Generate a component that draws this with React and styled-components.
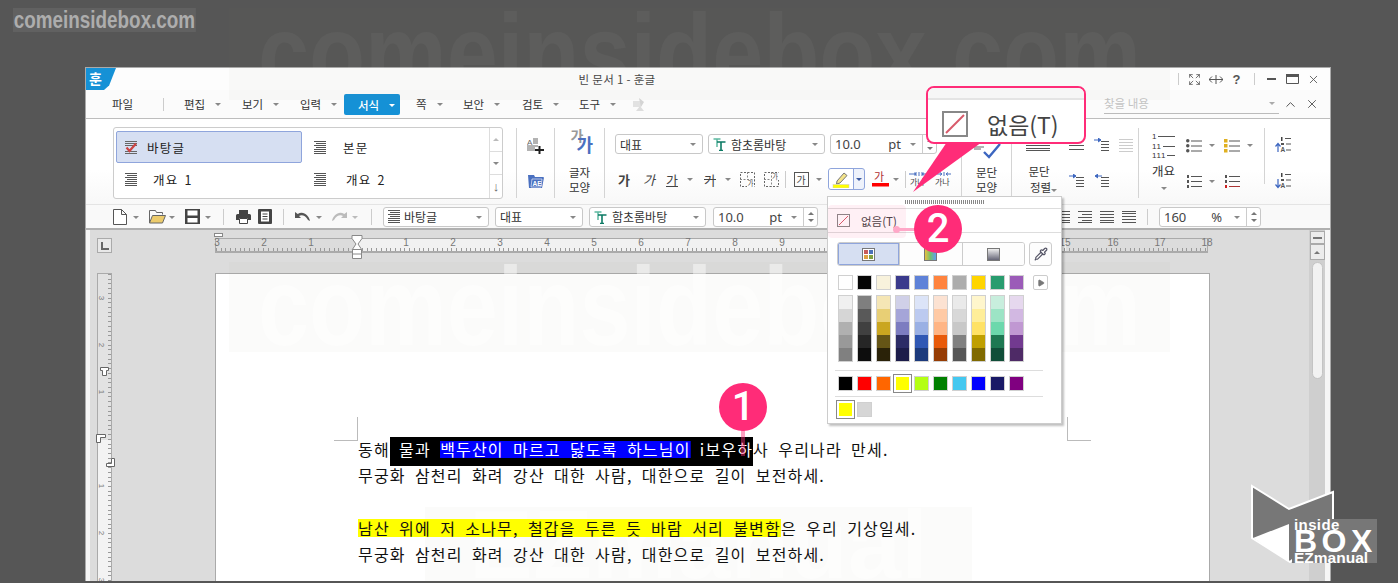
import React from "react";
import styled, { createGlobalStyle } from "styled-components";
import { Expand, X, ChevronUp, Pipette, Play } from "lucide-react";

const Global = createGlobalStyle`
  html, body { margin: 0; padding: 0; background: #565656; }
  body { font-family: "Noto Sans CJK KR", "Noto Sans", sans-serif; color: #333; overflow: hidden; }
  * { box-sizing: border-box; }
`;

const PINK = "#ff2c78";

const Page = styled.div`
  position: relative; width: 1398px; height: 583px; overflow: hidden; background: #565656;
  padding: 67px 0 2px 85px;
`;
const Win = styled.div`
  width: 1246px; height: 514px; background: #fff; border: 1px solid #aaa; border-bottom: 0;
  display: flex; flex-direction: column; overflow: hidden;
`;
const TitleBar = styled.div`
  height: 22px; flex: none; display: flex; align-items: center; position: relative; background: #fdfdfd;
`;
const LogoTab = styled.div`
  width: 30px; height: 22px; flex: none; background: #1591d6; color: #fff; font-size: 14px; font-weight: 700; line-height: 21px; padding-left: 3px;
  clip-path: polygon(0 0, 100% 0, 77% 80%, 60% 100%, 0 100%);
`;
const TitleText = styled.div`
  position: absolute; left: 482px; width: 98px; top: 1px; font-size: 11.5px; line-height: 20px; letter-spacing: .3px; text-align: center; white-space: nowrap; color: #444;
`;
const WinControls = styled.div`
  margin-left: auto; display: flex; align-items: center; height: 100%; padding-right: 6px; color: #555;
`;
const CtlCell = styled.div`
  width: ${p => p.$w || 21}px; display: flex; justify-content: center; align-items: center; font: bold 13px "Liberation Sans", sans-serif; color: #555;
`;
const VLine = styled.div`
  width: 1px; flex: none; height: ${p => p.$h || 20}px; background: ${p => p.$c || "#ccc"}; margin: 0 ${p => p.$mr ?? 0}px 0 ${p => p.$ml ?? 0}px; align-self: center;
`;

const MenuBar = styled.div`
  height: 29px; flex: none; display: flex; align-items: center; padding-left: 26px; background: #fbfbfb; border-bottom: 1px solid #bdbdbd; position: relative;
`;
const MenuItem = styled.div`
  width: ${p => p.$w}px; flex: none; font-size: 11.5px; line-height: 21px; display: flex; align-items: center; gap: 10px; color: #333; white-space: nowrap;
`;
const ActiveTab = styled.div`
  width: 56px; height: 21px; flex: none; margin: 1px 16px 0 0; background: #1591d6; border-radius: 2px; color: #fff; font-size: 11.5px; font-weight: 500;
  display: flex; align-items: center; gap: 10px; padding-left: 14px;
`;
const Caret = styled.span`
  width: 0; height: 0; flex: none; display: inline-block; border-left: 3px solid transparent; border-right: 3px solid transparent;
  border-top: 3px solid ${p => p.$c || "#888"}; margin-top: 1px;
`;
const SearchBox = styled.div`
  position: absolute; left: 1018px; top: 3px; width: 175px; height: 21px; border-bottom: 1px solid #bbb; color: #c4c4c4; font-size: 11.5px; line-height: 19px;
  display: flex; justify-content: space-between; align-items: center; padding-right: 4px;
`;
const SearchWrap = styled.div`flex: 1; height: 100%; display: flex;`;
const SearchBtns = styled.div`
  position: absolute; left: 1197px; top: 4px; display: flex; align-items: center; height: 20px; color: #555; gap: 7px;
`;

const Ribbon = styled.div`
  height: 86px; flex: none; display: flex; padding: 8px 0 0 27px; background: linear-gradient(#fff 60%, #f8f8f8); border-bottom: 1px solid #e4e4e4;
`;
const StyleBox = styled.div`
  width: 390px; height: 72px; border: 1px solid #ccc; border-radius: 3px; display: flex; margin-right: 13px; background: #fff; flex: none;
`;
const StyleGrid = styled.div`flex: 1; display: grid; grid-template-columns: 189px 1fr; grid-template-rows: 32px 32px; padding: 3px 0 0 2px;`;
const StyleItem = styled.div`
  display: flex; align-items: center; font-size: 12.5px; letter-spacing: 1.2px; word-spacing: 2px; padding-left: 9px; color: #222; white-space: nowrap;
  ${p => p.$on && `background:#d6dff2; border:1px solid #8fa5dc; border-radius:2px; padding-left:8px; margin-right:3px;`}
`;
const StyleLabel = styled.span`margin-left: ${p => p.$ml}px;`;
const StyleScroll = styled.div`width: 13px; border-left: 1px solid #ddd; display: flex; flex-direction: column;`;
const ScrollCell = styled.div`
  flex: 1; display: flex; align-items: center; justify-content: center; border-bottom: 1px solid #ddd; &:last-child { border-bottom: 0; }
  color: #666; font: 13px "Liberation Sans", sans-serif;
`;
const CaretUp = styled(Caret)`border-top: 0; border-bottom: 3px solid ${p => p.$c || "#bbb"};`;
const RSep = styled.div`width: 1px; height: ${p => p.$h || 70}px; background: #d4d4d4; flex: none; margin-top: 1px;`;
const IconCol = styled.div`
  width: ${p => p.$w}px; height: 72px; flex: none; display: flex; flex-direction: column; justify-content: space-around; align-items: center;
`;
const ShapeCol = styled.div`
  width: ${p => p.$w}px; height: 72px; flex: none; display: flex; flex-direction: column; align-items: center; font-size: 11.5px; line-height: 15px; color: #333;
`;
const ShapeIcon = styled.div`
  height: 38px; width: 30px; position: relative; flex: none;
`;
const BigGa = styled.span`
  position: absolute; font-weight: ${p => p.$b ? 700 : 400}; font-size: ${p => p.$s}px; color: ${p => p.$c}; left: ${p => p.$l}px; top: ${p => p.$t}px; line-height: 1;
`;
const FontCol = styled.div`
  width: 356px; height: 72px; flex: none; padding: 7px 0 0 10px; display: flex; flex-direction: column; gap: 14px;
`;
const Row = styled.div`display: flex; align-items: center; height: ${p => p.$h || 20}px; gap: ${p => p.$gap || 0}px;`;
const Select = styled.div`
  width: ${p => p.$w}px; height: 20px; flex: none; border: 1px solid #c8c8c8; border-radius: 3px; background: #fff; display: flex; align-items: center;
  font-size: 12px; padding: 0 ${p => p.$pr ?? 6}px 0 4px; color: #333; margin-left: ${p => p.$ml || 0}px; white-space: nowrap; overflow: hidden; position: relative;
`;
const SelText = styled.span`flex: 1; margin-left: ${p => p.$ml || 0}px;`;
const Num = styled.span`font: 13px "Noto Sans", sans-serif; color: #444; letter-spacing: 0;`;
const Spin = styled.div`
  width: 14px; align-self: stretch; flex: none; border-left: 1px solid #ccc; display: flex; flex-direction: column; align-items: center; justify-content: space-evenly; margin-left: 6px;
`;
const Cell = styled.div`
  width: ${p => p.$w}px; height: 100%; flex: none; display: flex; align-items: center; justify-content: center; margin-left: ${p => p.$ml || 0}px;
  font-size: 13px; color: #444;
`;
const Ga = styled.span`
  font-weight: ${p => p.$b ? 700 : 400}; font-style: ${p => p.$i ? "italic" : "normal"};
  text-decoration: ${p => p.$u ? "underline" : p.$s ? "line-through" : "none"}; color: ${p => p.$c || "#444"}; font-size: 13px;
`;
const BoxGa = styled.span`
  width: 15px; height: 15px; border: 1px solid #555; font-size: 10px; line-height: 13px; text-align: center; display: block; color: #444;
`;
const HiBtn = styled.div`
  width: 37px; height: 22px; flex: none; margin-left: 5px; border: 1px solid #8fa5dc; border-radius: 3px; background: #eef2fb; display: flex;
`;
const HiLeft = styled.div`flex: 1; display: flex; align-items: center; justify-content: center; background: #fff; border-radius: 3px 0 0 3px;`;
const HiRight = styled.div`width: 11px; border-left: 1px solid #8fa5dc; display: flex; align-items: center; justify-content: center;`;
const ParaCol = styled.div`
  width: 126px; height: 72px; flex: none; display: grid; grid-template-columns: 52px 25px 25px 24px; grid-template-rows: 36px 36px; justify-items: center; align-items: center;
`;
const ParaLabel = styled.div`font-size: 11.5px; line-height: 16px; text-align: center; color: #333; grid-row: 2; margin-top: -4px; padding-left: 2px; white-space: nowrap;`;
const ParaCaret = styled(Caret)`margin-right: -9px;`;
const OutlineCol = styled.div`
  width: 125px; height: 72px; flex: none; display: grid; grid-template-columns: 47px 38px 40px; grid-template-rows: 36px 36px; justify-items: start; align-items: center;
`;
const OutlineMain = styled.div`
  grid-row: 1 / 3; width: 100%; height: 100%; display: flex; flex-direction: column; align-items: center; font-size: 12.5px; color: #333; padding-left: 2px;
`;
const OutlineName = styled.div`line-height: 16px; margin-top: 2px;`;
const OutlineCaret = styled(Caret)`margin-top: 8px;`;
const Numbered = styled.div`
  font: 8px/9.5px "Liberation Sans", sans-serif; color: #333; display: flex; flex-direction: column; margin-top: 5px; width: 23px;
`;
const NumRow = styled.div`display: flex; align-items: center; gap: 1px; letter-spacing: .6px; &::after { content: ""; flex: 1; height: 1px; background: #555; }`;
const IconWithCaret = styled.div`display: flex; align-items: center; gap: 7px;`;
const SortCol = styled.div`width: 37px; height: 72px; display: flex; flex-direction: column; justify-content: space-around; align-items: center; padding-top: 0; flex: none;`;

const ToolBar = styled.div`
  height: 25px; flex: none; display: flex; align-items: center; padding-left: 27px; background: #f9f9f9; border-bottom: 2px solid #b0b0b0;
`;
const ToolRight = styled.div`margin-left: auto; margin-right: 69px; display: flex; align-items: center; gap: 8px;`;

const Work = styled.div`
  flex: 1; min-height: 0; display: grid; grid-template-columns: 125px 995px 1fr; grid-template-rows: 43px 1fr; background: #dcdcdc;
  border-left: 4px solid #f4f4f4; border-right: 5px solid #f6f6f6;
`;
const CornerCell = styled.div`padding: 8px 0 0 7px;`;
const CornerBox = styled.div`
  width: 15px; height: 15px; border: 1px solid #aaa; background: #e8e8e8; position: relative;
  &::after { content: ""; position: absolute; left: 3px; top: 3px; width: 6px; height: 6px; border-left: 2px solid #666; border-bottom: 2px solid #666; }
`;
const HRulerWrap = styled.div`padding-top: 8px; position: relative; grid-column: 2;`;
const HRuler = styled.div`
  height: 15px; width: 993px; position: relative; border: 1px solid #aaa; border-bottom: 2px solid #aaa; border-top-width: 1px;
  background: linear-gradient(90deg, #dcdcdc 143px, #f1f1f1 143px, #f1f1f1 850px, #dcdcdc 850px);
  &::after { content: ""; position: absolute; left: 0; right: 0; bottom: 0; height: 3px;
    background: repeating-linear-gradient(90deg, #999 0 1px, transparent 1px 4.71px); }
`;
const RulerNum = styled.span`
  position: absolute; top: -2px; font: 10px "Liberation Sans", sans-serif; color: #777; transform: translateX(-50%);
`;
const Marker = styled.svg`position: absolute; overflow: visible;`;
const VRulerCell = styled.div`position: relative; padding-left: 7px; grid-row: 2; grid-column: 1;`;
const VRuler = styled.div`
  width: 15px; height: 100%; position: relative; border: 1px solid #aaa; border-bottom: 0;
  background: linear-gradient(#e2e2e2 166px, #f3f3f3 166px);
  &::after { content: ""; position: absolute; top: 0; bottom: 0; right: 0; width: 3px;
    background: repeating-linear-gradient(#999 0 1px, transparent 1px 4.71px); }
`;
const VNum = styled.span`
  position: absolute; left: 1px; font: 8px "Liberation Sans", sans-serif; color: #777; transform: translateY(-50%) rotate(90deg);
`;
const Paper = styled.div`
  background: #fff; border: 1px solid #aaa; border-bottom: 0; position: relative; padding: 162px 0 0 142px; overflow: hidden; grid-row: 2; grid-column: 2;
`;
const Crop = styled.div`
  position: absolute; width: 24px; height: 24px; top: 143px; left: ${p => p.$l}px; border-bottom: 1px solid #bbb;
  ${p => p.$r ? "border-left: 1px solid #bbb;" : "border-right: 1px solid #bbb;"}
`;
const Line = styled.div`
  height: 26.3px; font-size: 16px; line-height: 26.3px; letter-spacing: 1.18px; word-spacing: 4.5px; color: #111; white-space: nowrap; position: relative; z-index: 2;
`;
const BlackSel = styled.span`background: #000; color: #fff; padding: 0 0 5px;`;
const BlueSel = styled.span`background: linear-gradient(#00f, #00f) center / 100% 17px no-repeat; color: #fff;`;
const Yellow = styled.span`background: linear-gradient(#ff0, #ff0) center / 100% 18px no-repeat;`;
const ScrollCol = styled.div`
  grid-row: 1 / 3; grid-column: 3; justify-self: end; width: 16px; background: #cfcfcf; display: flex; flex-direction: column; align-items: center; padding-top: 1px; gap: 0;
`;
const ScrBtn = styled.div`
  width: 15px; height: ${p => p.$h}px; border: 1px solid #aaa; background: #ececec; display: flex; align-items: center; justify-content: center; margin-bottom: ${p => p.$mb || 0}px; flex: none;
`;
const ScrMinus = styled.div`width: 9px; height: 2px; background: #777;`;
const Thumb = styled.div`width: 11px; height: 117px; border: 1px solid #c4c4c4; border-radius: 6px; background: #f2f2f2; flex: none;`;

const Panel = styled.div`
  position: absolute; left: 827px; top: 196px; width: 235px; height: 228px; background: #fff; border: 1px solid #ccc; box-shadow: 2px 2px 2px rgba(0,0,0,.25);
  display: flex; flex-direction: column; padding: 0;
`;
const Grip = styled.div`
  height: 12px; flex: none; border-bottom: 1px solid #ddd; display: flex; justify-content: center; align-items: flex-start; padding-top: 3px;
  &::after { content: ""; width: 80px; height: 4px;
    background: repeating-linear-gradient(90deg, #888 0 1px, transparent 1px 2px); margin-right: 0; }
`;
const NoneRow = styled.div`
  height: 24px; flex: none; border-bottom: 1px solid #ddd; display: flex; align-items: center; padding-left: 9px; gap: 11px; font-size: 11.5px; color: #444;
`;
const Tabs = styled.div`
  display: flex; height: 24px; margin: 9px 0 0 9px; flex: none;
`;
const TabGroup = styled.div`display: flex; width: 188px; height: 100%; border: 1px solid #ccc; border-radius: 3px; overflow: hidden;`;
const PTab = styled.div`
  flex: 1; display: flex; align-items: center; justify-content: center; border-right: 1px solid #ccc; &:last-child { border-right: 0; }
  ${p => p.$on ? "background:#d6dff2; box-shadow: inset 0 0 0 1px #8fa5dc;" : "background:#fdfdfd;"}
`;
const TabIcon = styled.div`
  width: 13px; height: 13px; border: 1px solid #777; background: ${p => p.$bg}; flex: none;
`;
const DropBtn = styled.div`
  width: 23px; height: 100%; margin-left: 4px; border: 1px solid #ccc; border-radius: 3px; display: flex; align-items: center; justify-content: center; color: #556; background: #fdfdfd;
`;
const SwatchRow = styled.div`display: flex; gap: 4px; padding-left: 10px; margin-top: ${p => p.$mt || 0}px; flex: none; align-items: center;`;
const Swatch = styled.div`
  width: 15px; height: 15px; border: 1px solid #d0d0d0; background: ${p => p.$c}; flex: none;
  ${p => p.$sel && "outline: 1px solid #888; outline-offset: 1px; border-color:#fff;"}
`;
const MoreBtn = styled.div`
  width: 15px; height: 15px; margin-left: 5px; border: 1px solid #ccc; border-radius: 2px; display: flex; align-items: center; justify-content: center; color: #777;
`;
const ShadeCol = styled.div`width: 15px; height: 67px; border: 1px solid #d0d0d0; display: flex; flex-direction: column; flex: none;`;
const Shade = styled.div`flex: 1; background: ${p => p.$c};`;
const PanelSep = styled.div`height: 1px; background: #ddd; margin: ${p => p.$m}; flex: none; width: 208px;`;

const Callout = styled.div`
  position: absolute; left: 926px; top: 86px; width: 160px; height: 58px; background: #fff; border: 2px solid ${PINK}; border-radius: 8px; overflow: hidden;
  display: flex; flex-direction: column;
`;
const CalloutTop = styled.div`height: 12px; background: #f6f6f6; border-bottom: 2px solid #e4e4e4; flex: none;`;
const CalloutBody = styled.div`
  flex: 1; display: flex; align-items: center; gap: 19px; padding: 5px 0 0 14px; font-size: 23px; line-height: 30px; color: #444; white-space: nowrap;
`;
const Pointer = styled.svg`position: absolute; left: 910px; top: 142px; width: 76px; height: 52px;`;
const Badge = styled.div`
  position: absolute; left: ${p => p.$x - 24}px; top: ${p => p.$y - 24}px; width: 48px; height: 48px; border-radius: 50%; background: ${PINK}; color: #fff;
  font: 500 40px/48px Roboto, sans-serif; text-align: center;
`;
const StemV = styled.div`position: absolute; left: 741px; top: 428px; width: 4px; height: 28px; background: rgba(255,44,120,.45); z-index: 3;`;
const StemH = styled.div`position: absolute; left: 897px; top: 228px; width: 20px; height: 3px; background: #ffa8c8;`;
const StemDot = styled.div`position: absolute; left: 893px; top: 226px; width: 7px; height: 7px; border-radius: 50%; background: #ffa8c8;`;
const HiNone = styled.div`position: absolute; left: 828px; top: 205px; width: 78px; height: 33px; border-radius: 4px; background: rgba(255,44,120,.07);`;

const Mark = styled.div`
  position: absolute; left: 13px; top: 8px; padding: 0 1px; background: rgba(255,255,255,.07); font: bold 23px/24px "Liberation Sans", sans-serif; color: #adadad; white-space: nowrap;
  transform: scaleX(.82); transform-origin: left center;
`;
const Wm = styled.div`
  position: absolute; left: ${p => p.$x}px; top: ${p => p.$y}px; width: ${p => p.$w}px; height: ${p => p.$h}px; background: rgba(120,120,90,.03); pointer-events: none; overflow: hidden;
  color: rgba(255,255,255,${p => p.$a}); font: bold ${p => p.$f}px/${p => p.$h}px "Liberation Sans", sans-serif; white-space: nowrap;
  display: flex; justify-content: center;
`;
const WmText = styled.span`flex: none; display: block; transform: scaleX(${p => p.$sx});`;
const BrandBox = styled.div`
  position: absolute; left: 1292px; top: 519px; width: 85px; height: 44px; background: #777; color: #fff; font-family: "Liberation Sans", sans-serif; font-weight: 700; padding-left: 2px; display: flex; flex-direction: column;
`;
const BrandSm = styled.div`font-size: 15px; line-height: 11px; letter-spacing: .4px;`;
const BrandBig = styled.div`font-size: 32px; line-height: 23px; letter-spacing: 4.5px; font-weight: 900;`;
const BrandEz = styled.div`font-size: 15.5px; line-height: 10px;`;
const BrandShape = styled.svg`position: absolute; left: 1250px; top: 484px; width: 86px; height: 80px;`;

/* ---------- drawings ---------- */
const L = ({ w = 14, h = 13, rows, sw = 1 }) => (
  <svg width={w} height={h} viewBox={`0 0 ${w} ${h}`}>
    {rows.map(([a, b, y, c], i) => <line key={i} x1={a} x2={b} y1={y + .5} y2={y + .5} stroke={c || "#555"} strokeWidth={sw} />)}
  </svg>
);
const paraRows = [[0,12,0],[2,12,2],[0,12,4],[2,12,6],[0,12,8],[0,12,10],[0,12,12]];
const ParaIcon = () => <L w={12} h={13} rows={paraRows} />;
const CheckPara = () => (
  <svg width="13" height="13" viewBox="0 0 13 13">
    {[0,2,4,10,12].map(y => <line key={y} x1="0" x2="12" y1={y + .5} y2={y + .5} stroke="#666" />)}
    <path d="M1.5 6.5 L4.5 10 L11 2.5" fill="none" stroke="#c44" strokeWidth="2.2" />
  </svg>
);
const NoneIcon = ({ s = 13 }) => (
  <svg width={s} height={s} viewBox="0 0 13 13" style={{ flex: "none" }}>
    <rect x=".5" y=".5" width="12" height="12" fill="#fff" stroke="#888" />
    <line x1="2" y1="11" x2="11" y2="2" stroke="#d85a6a" />
  </svg>
);
const T2 = () => (
  <svg width="13" height="14" viewBox="0 0 13 14" style={{ flex: "none" }}>
    <path d="M.5 2h7M4 2v8" stroke="#5cb8a0" strokeWidth="1.5" fill="none" />
    <path d="M4 5h8.5M8 5v9M6 13.5h4" stroke="#0c7a64" strokeWidth="1.6" fill="none" />
  </svg>
);
const Pencil = () => (
  <svg width="18" height="17" viewBox="0 0 18 17">
    <path d="M5 10 L12 2 L15 4.5 L8 12 L4.5 13Z" fill="#f4e48a" stroke="#777" />
    <rect x="1" y="13.5" width="16" height="3.5" fill="#ffff00" stroke="#ccc" strokeWidth=".5" />
  </svg>
);
const DashBox = ({ up }) => (
  <svg width="15" height="15" viewBox="0 0 15 15">
    <rect x=".5" y=".5" width="14" height="14" fill="none" stroke="#666" strokeDasharray="2 1.5" />
    <line x1="7.5" y1="0" x2="7.5" y2="15" stroke="#888" strokeDasharray="2 1.5" />
    <line x1="0" y1="7.5" x2="15" y2="7.5" stroke="#888" strokeDasharray="2 1.5" />
    <rect x={up ? 8 : 7} y={up ? 1 : 8} width="7" height="7" fill="#fff" />
    <text x={up ? 8 : 7.5} y={up ? 7 : 14} fontSize="6.5" fill="#444" fontFamily="Noto Sans CJK KR">가</text>
  </svg>
);
const Spread = ({ out }) => (
  <svg width="20" height="15" viewBox="0 0 20 15">
    {out ? <path d="M0 2h7M7 0v4M5 .8 7 2 5 3.2M13 2h7M13 0v4M15 .8 13 2l2 1.2M10 0v4" stroke="#4a70c0" fill="none" />
      : <path d="M3 2h5M6 .5 8 2 6 3.500M12 2h5M14 .5 12 2l2 1.500M10 0v4" stroke="#4a70c0" fill="none" />}
    <text x="1" y="13" fontSize="8" fill="#444" fontFamily="Noto Sans CJK KR">가나</text>
  </svg>
);
const ArrowLines = ({ dir }) => (
  <svg width="16" height="14" viewBox="0 0 16 14">
    {dir === "r" ? <path d="M0 2h6M4 0l3 2-3 2" stroke="#3c66c0" fill="#3c66c0" /> : <path d="M8 2H2M4 0 1 2l3 2" stroke="#3c66c0" fill="#3c66c0" />}
    {[3,6,9,12].map(y => <line key={y} x1="7" x2="15" y1={y + .5} y2={y + .5} stroke="#555" />)}
  </svg>
);
const BulletList = ({ c }) => (
  <svg width="16" height="15" viewBox="0 0 16 15">
    {[1,6,11].map(y => <g key={y}>
      <rect x="0" y={y} width="3.5" height="3.5" rx={c ? 0 : 1.7} fill={c || "#555"} />
      <line x1="5" x2="16" y1={y + 2} y2={y + 2} stroke="#555" />
    </g>)}
  </svg>
);
const NumList = ({ red }) => (
  <svg width="16" height="14" viewBox="0 0 16 14">
    {[1,6,11].map((y, i) => <g key={y}>
      <rect x="1" y={y} width="2" height="3" fill={red && i === 2 ? "#c22" : "#555"} />
      <line x1="5" x2="16" y1={y + 1.5} y2={y + 1.5} stroke={red && i === 2 ? "#a33" : "#555"} />
    </g>)}
  </svg>
);
const Sort = ({ up }) => (
  <svg width="17" height="16" viewBox="0 0 17 16">
    <path d={up ? "M3 15V7M.5 9.5 3 6.5l2.5 3" : "M3 6v8M.5 11.5 3 14.5l2.5-3"} stroke="#3c66c0" fill="none" strokeWidth="1.2" />
    <rect x="6" y="0" width="1.5" height="4" fill="#444" /><rect x="6" y="6" width="3" height="2" fill="#555" />
    <text x="5.500" y="15" fontSize="6.500" fontWeight="700" fill="#555" fontFamily="Liberation Sans">A</text>
    <path d="M10 1.500h6M11 7h5M11 13h5" stroke="#555" />
  </svg>
);
const NewDoc = () => <svg width="14" height="16" viewBox="0 0 14 16"><path d="M.5.5h8l5 5v10H.5zM8.500.5v5h5" fill="#fff" stroke="#555" /></svg>;
const Folder = () => <svg width="17" height="15" viewBox="0 0 17 15"><path d="M.5 14V1.500h6l1 2h6v2" fill="none" stroke="#666" /><path d="M.5 14 3.500 6.500h13l-3 7.500z" fill="#eccb6c" stroke="#666" /></svg>;
const Save = () => <svg width="15" height="15" viewBox="0 0 15 15"><path d="M0 0h15v15H0z" fill="#444" /><path d="M2.500 1.500h10v5h-10zM2.500 9h10v4.500h-10z" fill="#fff" /></svg>;
const Printer = () => <svg width="15" height="14" viewBox="0 0 15 14"><path d="M3 0h9v4H3z" fill="#444" /><path d="M1.500 4h12a1.500 1.500 0 0 1 1.500 1.500V10H12V8H3v2H0V5.500A1.500 1.500 0 0 1 1.500 4z" fill="#444" /><path d="M3.500 8.500h8v5h-8z" fill="#fff" stroke="#444" /></svg>;
const Preview = () => <svg width="14" height="15" viewBox="0 0 14 15"><rect width="14" height="15" rx="1" fill="#444" /><path d="M3 2.500h8v10H3z" fill="#fff" /><path d="M4.500 5h5M4.500 7.500h5M4.500 10h5" stroke="#444" /></svg>;
const Undo = ({ c, flip }) => <svg width="16" height="11" viewBox="0 0 16 11" style={flip ? { transform: "scaleX(-1)" } : undefined}><path d="M0 1v6h6L4 5c2-1.500 6-1.500 9 4l2 1C14 4 8-.5 2.700 3z" fill={c} /></svg>;
const BookIcon = () => (
  <svg width="16" height="13" viewBox="0 0 16 13">
    <path d="M0 0h6l1 2h8l1 .5L14 13H1z" fill="#4a70c0" />
    <path d="M4 4h10l-1 8H3z" fill="#4a70c0" stroke="#fff" strokeWidth=".6" />
    <text x="4.500" y="10.500" fontSize="6.500" fontWeight="700" fill="#fff" fontFamily="Liberation Sans">AE</text>
  </svg>
);
const AddStyle = () => (
  <svg width="17" height="16" viewBox="0 0 17 16">
    <text x="0" y="6.500" fontSize="8" fill="#666" fontFamily="Liberation Sans">A</text>
    <path d="M6 1h5M6 3h5M6 5h5M0 8h11M0 10h8M0 12h8" stroke="#666" />
    <path d="M8 12h9M12.500 8v8" stroke="#222" strokeWidth="2" />
  </svg>
);
const PalMini = () => (
  <svg width="13" height="13" viewBox="0 0 13 13" style={{ flex: "none" }}>
    <rect x=".5" y=".5" width="12" height="12" fill="#fff" stroke="#777" />
    <rect x="2" y="2" width="4" height="4" fill="#c85a5a" /><rect x="7" y="2" width="4" height="4" fill="#4a70b8" />
    <rect x="2" y="7" width="4" height="4" fill="#e0a040" /><rect x="7" y="7" width="4" height="4" fill="#80a040" />
  </svg>
);
const Updown = () => <svg width="14" height="9" viewBox="0 0 14 9"><path d="M0 4.500h14M3 1.500 0 4.500l3 3M11 1.500l3 3-3 3M7 0v9" stroke="#555" fill="none" /></svg>;
const Mx = () => <svg width="13" height="10" viewBox="0 0 13 10"><path d="M.5 2h12v7.500H.5z" fill="none" stroke="#555" /><path d="M0 1.500h13" stroke="#555" strokeWidth="3" /></svg>;

const swatchTop = ["#fff","#050505","#f8f2dc","#3a3a8c","#5f82d8","#ff843f","#adadad","#ffd500","#289c6e","#9b5bb8"];
const shades = [
  ["#f0f0f0","#d6d6d6","#b0b0b0","#999","#808080"],["#7f7f7f","#595959","#404040","#262626","#0d0d0d"],
  ["#f5e6b5","#e8cf75","#caa620","#655516","#2a2208"],["#d0d0e8","#a5a5d8","#7c7cc0","#2c2c66","#1c1c4a"],
  ["#dce4f8","#bccaf0","#9ab0e4","#3058b4","#1c3a7c"],["#fce2d2","#ffcaa5","#ffb585","#e85a0a","#963c04"],
  ["#eaeaea","#d8d8d8","#c8c8c8","#808080","#565656"],["#fff6cc","#ffee99","#ffe265","#bf9f00","#806a00"],
  ["#c8eedd","#9ce4c5","#6cd8ac","#1e7852","#104e38"],["#e6d8ee","#d2b8e2","#c098d2","#723a90","#4e2a66"],
];
const standard = ["#000","#f00","#ff6600","#ff0","#b4ff14","#008000","#44c8f0","#00f","#191966","#800080"];
const menus = [["편집",58],["보기",58],["입력",44]];
const menus2 = [["쪽",47],["보안",59],["검토",57],["도구",57]];
const hNums = [[3,1],[2,48],[1,95],[1,190],[2,237],[3,284],[4,331],[5,378],[6,425],[7,472],[8,519],[9,566],[15,849],[16,897],[17,944],[18,991]];
const vNums = [[3,24],[2,71],[1,118],[1,212],[2,259],[3,306]];

const SpinBox = () => <Spin><CaretUp $c="#777" /><Caret $c="#777" /></Spin>;

export default function App() {
  return (
    <Page>
      <Global />
      <Win>
        <TitleBar>
          <LogoTab>훈</LogoTab>
          <TitleText>빈 문서 1 - 훈글</TitleText>
          <WinControls>
            <VLine $h={12} $mr={5} />
            <CtlCell><Expand size={13} strokeWidth={1.5} /></CtlCell>
            <CtlCell><Updown /></CtlCell>
            <CtlCell>?</CtlCell>
            <VLine $h={12} $ml={7} $mr={6} />
            <CtlCell><svg width="9" height="2"><rect width="9" height="2" fill="#555" /></svg></CtlCell>
            <CtlCell><Mx /></CtlCell>
            <CtlCell><X size={13} strokeWidth={1.6} /></CtlCell>
          </WinControls>
        </TitleBar>
        <MenuBar>
          <MenuItem $w={51}>파일</MenuItem>
          <VLine $h={13} $mr={20} />
          {menus.map(([t, w]) => <MenuItem key={t} $w={w}>{t}<Caret /></MenuItem>)}
          <ActiveTab>서식<Caret $c="#fff" /></ActiveTab>
          {menus2.map(([t, w]) => <MenuItem key={t} $w={w}>{t}<Caret /></MenuItem>)}
          <SearchWrap>
            <svg width="14" height="13" viewBox="0 0 14 13" style={{ marginTop: 8, marginLeft: -3 }}><path d="M0 3h8v6H0z" fill="#e2e2e2" /><path d="M6 0l5 4-3 5z" fill="#d4d4d4" /><path d="M3 13l4-5 4 5z" fill="#ddd" /></svg>
          </SearchWrap>
          <SearchBox>찾을 내용<Caret $c="#aaa" /></SearchBox>
          <SearchBtns><ChevronUp size={15} strokeWidth={1.6} /><X size={14} strokeWidth={1.6} /></SearchBtns>
        </MenuBar>
        <Ribbon>
          <StyleBox>
            <StyleGrid>
              <StyleItem $on><CheckPara /><StyleLabel $ml={9}>바탕글</StyleLabel></StyleItem>
              <StyleItem><ParaIcon /><StyleLabel $ml={17}>본문</StyleLabel></StyleItem>
              <StyleItem><ParaIcon /><StyleLabel $ml={16}>개요 1</StyleLabel></StyleItem>
              <StyleItem><ParaIcon /><StyleLabel $ml={20}>개요 2</StyleLabel></StyleItem>
            </StyleGrid>
            <StyleScroll>
              <ScrollCell><CaretUp /></ScrollCell>
              <ScrollCell><Caret /></ScrollCell>
              <ScrollCell>↓</ScrollCell>
            </StyleScroll>
          </StyleBox>
          <RSep />
          <IconCol $w={37}><AddStyle /><BookIcon /></IconCol>
          <RSep />
          <ShapeCol $w={49}>
            <ShapeIcon><BigGa $s={14} $c="#999" $l={6} $t={1} $b>가</BigGa><BigGa $s={18} $c="#4a70c0" $l={12} $t={8} $b>가</BigGa></ShapeIcon>
            <span>글자</span><span>모양</span>
          </ShapeCol>
          <RSep />
          <FontCol>
            <Row>
              <Select $w={88}><SelText>대표</SelText><Caret /></Select>
              <Select $w={117} $ml={5}><T2 /><SelText $ml={5}>함초롬바탕</SelText><Caret /></Select>
              <Select $w={107} $ml={5} $pr={0}><SelText><Num>10.0</Num></SelText><Num>pt</Num><Caret style={{ marginLeft: 9 }} /><SpinBox /></Select>
            </Row>
            <Row $h={22}>
              <Cell $w={18}><Ga $b>가</Ga></Cell>
              <Cell $w={32}><Ga $i>가</Ga></Cell>
              <Cell $w={14}><Ga $u>가</Ga></Cell>
              <Cell $w={22}><Caret /></Cell>
              <Cell $w={18}><Ga $s>가</Ga></Cell>
              <Cell $w={18}><Caret /></Cell>
              <Cell $w={20}><DashBox /></Cell>
              <Cell $w={28}><DashBox up /></Cell>
              <VLine $h={17} $mr={1} />
              <Cell $w={28}><BoxGa>가</BoxGa></Cell>
              <Cell $w={8}><Caret /></Cell>
              <HiBtn><HiLeft><Pencil /></HiLeft><HiRight><Caret $c="#3c5aa0" /></HiRight></HiBtn>
              <Cell $w={24} $ml={3}><svg width="17" height="16" viewBox="0 0 17 16"><text x="2" y="10" fontSize="11" fill="#b03030" fontFamily="Noto Sans CJK KR">가</text><rect y="12" width="17" height="3.5" fill="#f00" /></svg></Cell>
              <Cell $w={8}><Caret /></Cell>
              <VLine $h={17} $ml={5} />
              <Cell $w={25}><Spread out /></Cell>
              <Cell $w={26}><Spread /></Cell>
            </Row>
          </FontCol>
          <RSep />
          <ShapeCol $w={49}>
            <ShapeIcon><svg width="32" height="33" viewBox="0 0 32 33"><path d="M2 20h10M2 22h7" stroke="#666" /><path d="M12 25l5 5 11-13" fill="none" stroke="#3c66c0" strokeWidth="2.4" /></svg></ShapeIcon>
            <span>문단</span><span>모양</span>
          </ShapeCol>
          <RSep />
          <ParaCol>
            <L w={24} h={12} rows={[[0,24,6],[0,24,9],[0,24,11]]} />
            <L w={15} h={12} rows={[[0,15,6],[0,15,10]]} />
            <ArrowLines dir="r" />
            <L w={14} h={14} rows={[[0,14,1,"#ccc"],[0,14,4,"#ccc"],[0,14,7,"#ccc"],[0,14,10,"#ccc"],[0,14,13,"#ccc"]]} />
            <ParaLabel>문단<br />정렬<ParaCaret /></ParaLabel>
            <ArrowLines dir="r" />
            <ArrowLines dir="l" />
          </ParaCol>
          <RSep />
          <OutlineCol>
            <OutlineMain>
              <Numbered><NumRow>1</NumRow><NumRow>11</NumRow><NumRow>111</NumRow></Numbered>
              <OutlineName>개요</OutlineName>
              <OutlineCaret />
            </OutlineMain>
            <IconWithCaret><BulletList /><Caret /></IconWithCaret>
            <IconWithCaret><BulletList c="#e0b020" /><Caret /></IconWithCaret>
            <IconWithCaret><NumList /><Caret /></IconWithCaret>
            <NumList red />
          </OutlineCol>
          <RSep $h={56} />
          <SortCol><Sort up /><Sort /></SortCol>
        </Ribbon>
        <ToolBar>
          <Cell $w={14}><NewDoc /></Cell><Cell $w={18}><Caret /></Cell>
          <Cell $w={24}><Folder /></Cell><Cell $w={6}><Caret /></Cell>
          <Cell $w={24} $ml={5}><Save /></Cell><Cell $w={8}><Caret /></Cell>
          <VLine $h={16} $ml={11} $mr={4} />
          <Cell $w={30}><Printer /></Cell><Cell $w={14}><Preview /></Cell>
          <VLine $h={16} $ml={11} />
          <Cell $w={16} $ml={11}><Undo c="#555" /></Cell><Cell $w={16}><Caret /></Cell>
          <Cell $w={24}><Undo c="#bbb" flip /></Cell><Cell $w={8}><Caret $c="#bbb" /></Cell>
          <VLine $h={16} $ml={12} />
          <Select $w={106} $ml={11}><ParaIcon /><SelText $ml={4}>바탕글</SelText><Caret /></Select>
          <Select $w={88} $ml={6}><SelText>대표</SelText><Caret /></Select>
          <Select $w={117} $ml={6}><T2 /><SelText $ml={5}>함초롬바탕</SelText><Caret /></Select>
          <Select $w={105} $ml={7} $pr={0}><SelText><Num>10.0</Num></SelText><Num>pt</Num><Caret style={{ marginLeft: 9 }} /><SpinBox /></Select>
          <ToolRight>
            <L w={14} h={13} rows={[[0,14,1],[4,14,4],[0,14,7],[4,14,10],[0,14,12]]} />
            <L w={14} h={13} rows={[[0,14,1],[4,14,4],[0,14,7],[4,14,10],[0,14,12]]} />
            <L w={14} h={13} rows={[[0,14,1],[0,14,4],[0,14,7],[0,14,10],[0,14,12]]} />
            <L w={14} h={13} rows={[[0,14,1],[0,14,3],[0,14,6],[0,14,9],[0,14,12]]} />
            <VLine $h={16} $ml={3} $mr={3} />
            <Select $w={102} $ml={0} $pr={0}><SelText><Num>160</Num></SelText><Num>%</Num><Caret style={{ marginLeft: 12 }} /><SpinBox /></Select>
          </ToolRight>
        </ToolBar>
        <Work>
          <CornerCell><CornerBox /></CornerCell>
          <HRulerWrap>
            <HRuler>
              {hNums.map(([n, x], i) => <RulerNum key={i} style={{ left: x }}>{n}</RulerNum>)}
            </HRuler>
            <Marker width="14" height="26" viewBox="0 0 14 26" style={{ left: 136, top: 5 }}><path d="M1 .5h10v3L7 9l4 6H1l4-6-4-5.500z" fill="#fff" stroke="#888" /><path d="M1.500 14.500h9v9h-9zM1.500 19h9" fill="#fff" stroke="#888" /></Marker>
            <Marker width="9" height="5" viewBox="0 0 9 5" style={{ left: -1, top: 3 }}><rect x=".5" y=".5" width="8" height="3" fill="#fff" stroke="#888" /></Marker>
          </HRulerWrap>
          <VRulerCell>
            <VRuler>
              {vNums.map(([n, y], i) => <VNum key={i} style={{ top: y }}>{n}</VNum>)}
            </VRuler>
            <Marker width="9" height="9" viewBox="0 0 9 9" style={{ left: 10, top: 94 }}><path d="M.5.5h8v3h-2v5h-4v-5h-2z" fill="#fff" stroke="#666" /></Marker>
            <Marker width="11" height="9" viewBox="0 0 11 9" style={{ left: 6, top: 161 }}><path d="M.5.5h9v3h-5v5h-4z" fill="#fff" stroke="#666" /></Marker>
            <Marker width="9" height="9" viewBox="0 0 9 9" style={{ left: 16, top: 185 }}><path d="M5.500.5h3v8h-8v-3h5z" fill="#fff" stroke="#666" /></Marker>
          </VRulerCell>
          <Paper>
            <Crop $l={118} />
            <Crop $l={851} $r />
            <Line>동해<BlackSel> 물과 <BlueSel>백두산이 마르고 닳도록 하느님이</BlueSel> i보우하</BlackSel>사 우리나라 만세.</Line>
            <Line>무궁화 삼천리 화려 강산 대한 사람, 대한으로 길이 보전하세.</Line>
            <Line />
            <Line><Yellow>남산 위에 저 소나무, 철갑을 두른 듯 바람 서리 불변함</Yellow>은 우리 기상일세.</Line>
            <Line>무궁화 삼천리 화려 강산 대한 사람, 대한으로 길이 보전하세.</Line>
          </Paper>
          <ScrollCol>
            <ScrBtn $h={13}><ScrMinus /></ScrBtn>
            <ScrBtn $h={16} $mb={2}><CaretUp $c="#777" /></ScrBtn>
            <Thumb />
          </ScrollCol>
        </Work>
      </Win>

      <Wm $x={229} $y={8} $w={941} $h={92} $f={112} $a={0.04}><WmText $sx={0.82}>comeinsidebox.com</WmText></Wm>
      <Wm $x={229} $y={262} $w={941} $h={90} $f={112} $a={0.45}><WmText $sx={0.82}>comeinsidebox.com</WmText></Wm>
      <Wm $x={425} $y={507} $w={547} $h={76} $f={96} $a={0.45}><WmText $sx={1}>EZmanual</WmText></Wm>

      <Panel>
        <Grip />
        <NoneRow><NoneIcon />없음(T)</NoneRow>
        <Tabs>
          <TabGroup>
            <PTab $on><PalMini /></PTab>
            <PTab><TabIcon $bg="linear-gradient(90deg,#e8c040,#70c070,#60a0f0)" /></PTab>
            <PTab><TabIcon $bg="linear-gradient(#eee,#667)" /></PTab>
          </TabGroup>
          <DropBtn><Pipette size={14} strokeWidth={2} /></DropBtn>
        </Tabs>
        <SwatchRow $mt={9}>
          {swatchTop.map((c, i) => <Swatch key={i} $c={c} />)}
          <MoreBtn><Play size={8} fill="#777" /></MoreBtn>
        </SwatchRow>
        <SwatchRow $mt={5}>
          {shades.map((col, i) => <ShadeCol key={i}>{col.map((c, j) => <Shade key={j} $c={c} />)}</ShadeCol>)}
        </SwatchRow>
        <PanelSep $m="8px 0 0 7px" />
        <SwatchRow $mt={5}>
          {standard.map((c, i) => <Swatch key={i} $c={c} $sel={i === 3} />)}
        </SwatchRow>
        <PanelSep $m="5px 0 0 7px" />
        <SwatchRow $mt={5}>
          <Swatch $c="#ff0" $sel />
          <Swatch $c="#d6d6d6" />
        </SwatchRow>
      </Panel>
      <HiNone />

      <Pointer viewBox="0 0 76 52"><path d="M37 0 H72 L3 50z" fill={PINK} /></Pointer>
      <Callout>
        <CalloutTop />
        <CalloutBody><NoneIcon s={26} />없음(T)</CalloutBody>
      </Callout>

      <StemV />
      <Badge $x={743} $y={407}>1</Badge>
      <StemDot /><StemH />
      <Badge $x={938} $y={229}>2</Badge>

      <Mark>comeinsidebox.com</Mark>

      <BrandShape viewBox="0 0 86 80">
        <path d="M2 2 39 25 83 8V40L40 78 2 54z" fill="#777" stroke="#fff" strokeWidth="2" />
        <path d="M3 54 39 40V78z" fill="#fff" />
      </BrandShape>
      <BrandBox>
        <BrandSm>inside</BrandSm>
        <BrandBig>BOX</BrandBig>
        <BrandEz>EZmanual</BrandEz>
      </BrandBox>
    </Page>
  );
}
